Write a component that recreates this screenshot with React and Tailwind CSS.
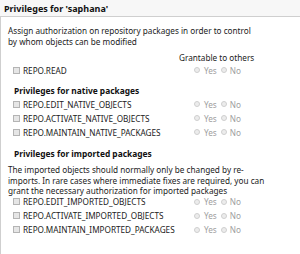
import React from "react";

const font = { fontFamily: '"Noto Sans", "Open Sans", sans-serif' };

const CheckBox = () => (
  <span className="inline-block w-[7px] h-[7px] border border-[#b4b4b4] bg-[#e6e6e6] shrink-0" />
);

const Radio = () => (
  <span className="inline-block w-[6px] h-[6px] rounded-full border border-[#cfcfcf] bg-[#ececec] shrink-0" />
);

const Grant = () => (
  <div className="flex items-center text-[#a0a0a0]">
    <Radio />
    <span className="ml-[4px]">Yes</span>
    <span className="ml-[4px]" />
    <Radio />
    <span className="ml-[3px]">No</span>
  </div>
);

const PrivRow = ({ name }) => (
  <div className="flex items-center h-[14px]">
    <div className="flex items-center w-[193px] pl-[12px]">
      <CheckBox />
      <span className="ml-[3px] text-[#222]">{name}</span>
    </div>
    <Grant />
  </div>
);

export default function App() {
  const native = [
    "REPO.EDIT_NATIVE_OBJECTS",
    "REPO.ACTIVATE_NATIVE_OBJECTS",
    "REPO.MAINTAIN_NATIVE_PACKAGES",
  ];
  const imported = [
    "REPO.EDIT_IMPORTED_OBJECTS",
    "REPO.ACTIVATE_IMPORTED_OBJECTS",
    "REPO.MAINTAIN_IMPORTED_PACKAGES",
  ];

  return (
    <div className="w-[300px] h-[254px] bg-white text-[8.2px] leading-[11px] text-[#222] overflow-hidden" style={font}>
      {/* HEADER */}
      <div className="h-[17px] bg-[#f7f7f7] border-b border-[#cfcfcf] flex items-center pl-[4px]">
        <span className="font-bold text-[9px] text-[#111]">Privileges for 'saphana'</span>
      </div>

      {/* BODY */}
      <div className="border-l border-[#cfcfcf] h-[237px] pt-[8px]">
        <p className="pl-[7px]">
          Assign authorization on repository packages in order to control
          <br />
          by whom objects can be modified
        </p>

        <div className="pl-[178px] mt-[5px] h-[11px]">Grantable to others</div>
        <PrivRow name="REPO.READ" />

        <div className="pl-[13px] mt-[8px] h-[12px] font-bold text-[8.4px] text-[#111]">Privileges for native packages</div>
        {native.map((n) => (
          <PrivRow key={n} name={n} />
        ))}

        <div className="pl-[13px] mt-[9px] h-[12px] font-bold text-[8.4px] text-[#111]">Privileges for imported packages</div>
        <p className="pl-[7px] mt-[5px] leading-[10.5px]">
          The imported objects should normally only be changed by re-
          <br />
          imports. In rare cases where immediate fixes are required, you can
          <br />
          grant the necessary authorization for imported packages
        </p>
        <div className="-mt-[2px]">
          {imported.map((n) => (
            <PrivRow key={n} name={n} />
          ))}
        </div>
      </div>
    </div>
  );
}
